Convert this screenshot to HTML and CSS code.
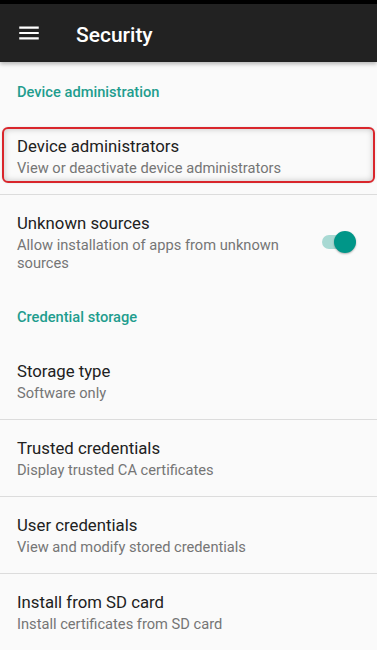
FILE: index.html
```html
<!DOCTYPE html>
<html>
<head>
<meta charset="utf-8">
<link rel="stylesheet" href="styles.css">
</head>
<body>
<div class="status"></div>
<header class="toolbar">
  <svg class="menu" viewBox="0 0 24 24" width="26" height="26"><path fill="#fff" d="M3 18h18v-2H3v2zm0-5h18v-2H3v2zm0-7v2h18V6H3z"/></svg>
  <div class="title">Security</div>
</header>
<main class="list">
  <div class="category first">Device administration</div>
  <div class="highlight-wrap">
    <div class="highlight">
      <div class="item-title">Device administrators</div>
      <div class="item-sub">View or deactivate device administrators</div>
    </div>
  </div>
  <div class="row switch-row">
    <div class="texts">
      <div class="item-title">Unknown sources</div>
      <div class="item-sub">Allow installation of apps from unknown sources</div>
    </div>
    <div class="switch"><span class="track"></span><span class="thumb"></span></div>
  </div>
  <div class="category">Credential storage</div>
  <div class="row divided">
    <div class="item-title">Storage type</div>
    <div class="item-sub">Software only</div>
  </div>
  <div class="row divided">
    <div class="item-title">Trusted credentials</div>
    <div class="item-sub">Display trusted CA certificates</div>
  </div>
  <div class="row divided">
    <div class="item-title">User credentials</div>
    <div class="item-sub">View and modify stored credentials</div>
  </div>
  <div class="row">
    <div class="item-title">Install from SD card</div>
    <div class="item-sub">Install certificates from SD card</div>
  </div>
</main>
</body>
</html>
```
FILE: styles.css
```css
html, body {
  margin: 0;
  padding: 0;
}
body {
  width: 377px;
  height: 650px;
  overflow: hidden;
  background: #fafafa;
  font-family: Roboto, "Noto Sans", sans-serif;
}
.status {
  height: 4px;
  background: #000;
}
.toolbar {
  height: 58px;
  background: #222222;
  display: flex;
  align-items: center;
  box-shadow: 0 2px 4px rgba(0,0,0,0.28);
  position: relative;
  z-index: 1;
}
.menu {
  margin-left: 16px;
  display: block;
}
.title {
  margin-left: 34px;
  padding-top: 3px;
  color: #fff;
  font-size: 21px;
  font-weight: 500;
}
.list {
  display: flex;
  flex-direction: column;
}
.category {
  color: #1f9d8e;
  font-size: 14.66px;
  font-weight: 500;
  line-height: 20px;
  padding: 18px 17px 16px;
}
.category.first {
  padding-top: 20px;
  padding-bottom: 0;
}
.item-title {
  color: #212121;
  font-size: 16.75px;
  line-height: 22px;
}
.item-sub {
  color: #757575;
  font-size: 14.66px;
  line-height: 18px;
  margin-top: 2px;
}
.highlight-wrap {
  padding: 25px 2px 11px;
  border-bottom: 1px solid #dcdcdc;
}
.highlight {
  height: 56px;
  box-sizing: border-box;
  border: 2px solid #d9262c;
  border-radius: 6px;
  padding: 6px 13px 0;
  box-shadow: inset 0 0 6px rgba(0,0,0,0.22), 0 0 2px rgba(0,0,0,0.12);
}
.row {
  padding: 17px 17px 17px;
}
.row.divided {
  border-bottom: 1px solid #dcdcdc;
}
.switch-row {
  display: flex;
  align-items: center;
  padding-right: 21px;
}
.texts {
  flex: 1;
  padding-right: 38px;
}
.switch {
  position: relative;
  width: 34px;
  height: 22px;
  flex: none;
}
.track {
  position: absolute;
  left: 0;
  top: 4px;
  width: 30px;
  height: 14px;
  border-radius: 7px;
  background: #a8d9d3;
}
.thumb {
  position: absolute;
  right: 0;
  top: 0;
  width: 22px;
  height: 22px;
  border-radius: 50%;
  background: #009688;
  box-shadow: 0 1px 2px rgba(0,0,0,0.3);
}
```
